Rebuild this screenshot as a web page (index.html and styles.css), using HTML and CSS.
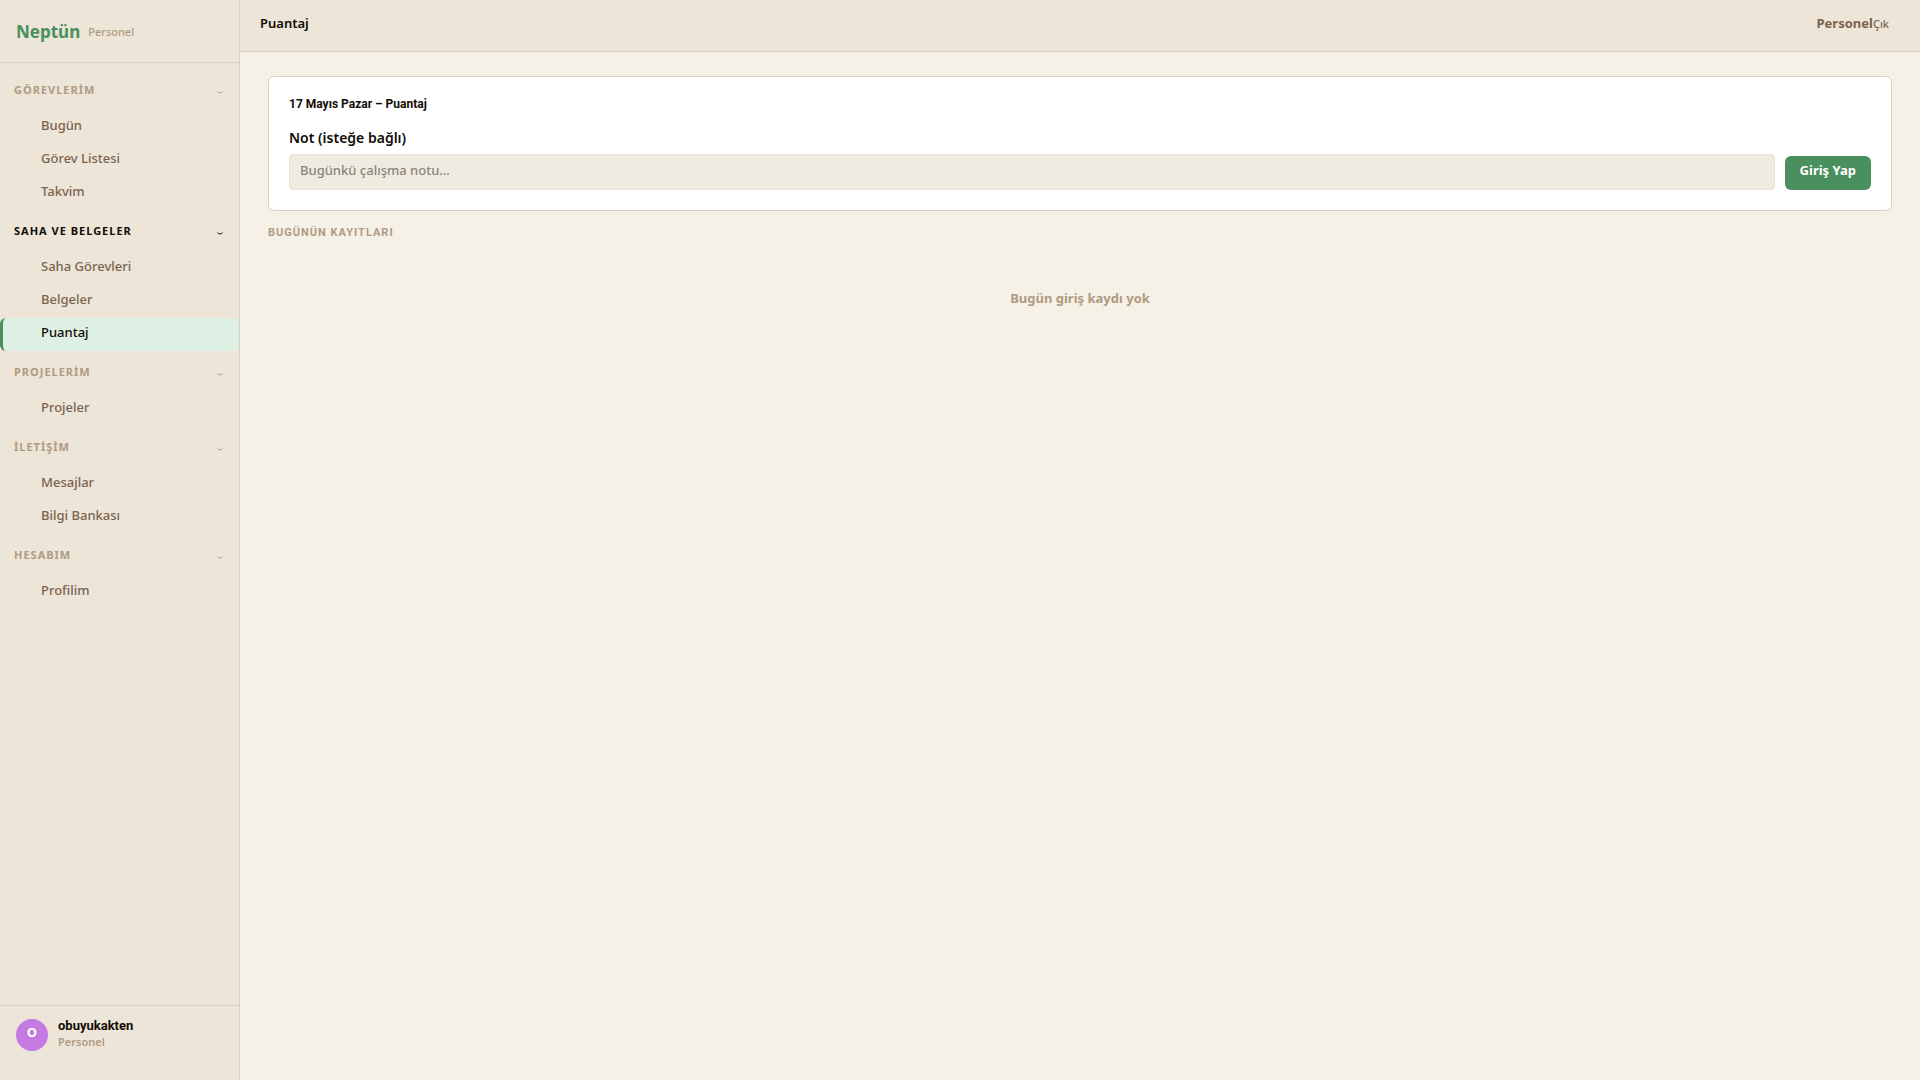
FILE: index.html
```html
<!DOCTYPE html>
<html lang="tr">
<head>
<meta charset="utf-8">
<meta name="viewport" content="width=device-width, initial-scale=1">
<title>Puantaj – Neptün</title>
<link rel="stylesheet" href="styles.css">
</head>
<body>
<svg class="sprite" aria-hidden="true"><symbol id="chevron" viewBox="0 0 6 3"><path d="M.4 .6Q1.4 1.9 3 1.9T5.6 .6" fill="none" stroke="currentColor" stroke-width="1"/></symbol></svg>
<div class="app">
  <aside class="sidebar">
    <div class="brand"><span class="brand-name">Neptün</span><span class="brand-role">Personel</span></div>
    <nav class="nav">
      <section>
        <button class="group" type="button">GÖREVLERİM<svg class="chevron"><use href="#chevron"/></svg></button>
        <a class="item" href="#bugun">Bugün</a>
        <a class="item" href="#gorevler">Görev Listesi</a>
        <a class="item" href="#takvim">Takvim</a>
      </section>
      <section>
        <button class="group group-current" type="button">SAHA VE BELGELER<svg class="chevron"><use href="#chevron"/></svg></button>
        <a class="item" href="#saha">Saha Görevleri</a>
        <a class="item" href="#belgeler">Belgeler</a>
        <a class="item item-active" href="#puantaj" aria-current="page">Puantaj</a>
      </section>
      <section>
        <button class="group" type="button">PROJELERİM<svg class="chevron"><use href="#chevron"/></svg></button>
        <a class="item" href="#projeler">Projeler</a>
      </section>
      <section>
        <button class="group" type="button">İLETİŞİM<svg class="chevron"><use href="#chevron"/></svg></button>
        <a class="item" href="#mesajlar">Mesajlar</a>
        <a class="item" href="#bilgi">Bilgi Bankası</a>
      </section>
      <section>
        <button class="group" type="button">HESABIM<svg class="chevron"><use href="#chevron"/></svg></button>
        <a class="item" href="#profil">Profilim</a>
      </section>
    </nav>
    <div class="user">
      <div class="avatar">O</div>
      <div class="user-info"><div class="user-name">obuyukakten</div><div class="user-role">Personel</div></div>
    </div>
  </aside>
  <div class="page">
    <header class="topbar">
      <h1 class="title">Puantaj</h1>
      <span class="account">Personel</span>
      <button class="logout" type="button">Çık</button>
    </header>
    <main class="content">
      <form class="card">
        <h2 class="card-title">17 Mayıs Pazar – Puantaj</h2>
        <div class="entry">
          <div class="field">
            <label class="label" for="note">Not (isteğe bağlı)</label>
            <input class="input" id="note" type="text" placeholder="Bugünkü çalışma notu…">
          </div>
          <button class="submit" type="button">Giriş Yap</button>
        </div>
      </form>
      <h3 class="records-title">BUGÜNÜN KAYITLARI</h3>
      <p class="empty">Bugün giriş kaydı yok</p>
    </main>
  </div>
</div>
</body>
</html>
```
FILE: styles.css
```css
:root {
  --bar: #ece5d8;
  --page: #f6f1e6;
  --line: #d9d0bf;
  --green: #4a8f5e;
  --ink: #120c05;
  --soft: #7a634e;
  --muted: #b09a82;
  --compact: Roboto, "Noto Sans", sans-serif;
}
* { box-sizing: border-box; }
body {
  margin: 0;
  background: var(--page);
  color: var(--ink);
  font: 500 13px/19px "Noto Sans", sans-serif;
}
h1, h2, h3, p { margin: 0; }
button, input { font: inherit; }
button { border: 0; background: none; cursor: pointer; }
.sprite { display: none; }

.app { display: flex; min-height: 100vh; }
.sidebar {
  display: flex;
  flex: 0 0 240px;
  flex-direction: column;
  background: var(--bar);
  border-right: 1px solid var(--line);
}
.brand {
  display: flex;
  align-items: center;
  gap: 8px;
  padding: 20px 16px 18px;
  border-bottom: 1px solid var(--line);
}
.brand-name { color: var(--green); font-size: 17px; font-weight: 700; line-height: 24px; }
.brand-role { color: var(--muted); font-size: 11px; line-height: 16px; }

.nav { flex: 1; padding-top: 6px; }
.group {
  display: flex;
  align-items: center;
  justify-content: space-between;
  width: 100%;
  padding: 13px 16px 13px 14px;
  color: var(--muted);
  font-size: 11px;
  font-weight: 700;
  line-height: 16px;
  letter-spacing: 1px;
}
.group-current { color: var(--ink); }
.chevron { width: 6px; height: 3px; margin-top: 4px; }
.item {
  display: block;
  padding: 5px 16px 9px 38px;
  border-left: 3px solid transparent;
  border-radius: 6px;
  color: var(--soft);
  text-decoration: none;
}
.item-active { background: #def0e4; border-left-color: var(--green); color: var(--ink); }

.user {
  display: flex;
  align-items: center;
  gap: 10px;
  padding: 12px 16px 28px;
  border-top: 1px solid var(--line);
}
.avatar {
  width: 32px;
  height: 32px;
  border-radius: 50%;
  background: #c47ae0;
  color: #fff;
  font-weight: 700;
  line-height: 27px;
  text-align: center;
}
.user-info { padding-bottom: 2px; line-height: 16px; }
.user-name { font-family: var(--compact); font-size: 13px; font-weight: 700; }
.user-role { color: var(--muted); font-size: 11px; font-weight: 600; }

.page { display: flex; flex: 1; flex-direction: column; min-width: 0; }
.topbar {
  display: flex;
  align-items: center;
  padding: 14px 31px 18px 20px;
  background: var(--bar);
  border-bottom: 1px solid var(--line);
}
.title { flex: 1; font-size: 13px; font-weight: 600; }
.account { color: var(--soft); font-weight: 700; }
.logout { padding: 0; color: var(--soft); font-size: 11px; }

.content { padding: 24px 28px; }
.card {
  padding: 20px;
  background: #fff;
  border: 1px solid var(--line);
  border-radius: 6px;
}
.card-title {
  margin-bottom: 17px;
  font-family: var(--compact);
  font-size: 12px;
  font-weight: 700;
  line-height: 14px;
}
.entry { display: flex; align-items: flex-end; gap: 10px; }
.field { display: flex; flex: 1; flex-direction: column; gap: 6px; }
.label { font-size: 14px; font-weight: 600; line-height: 20px; }
.input {
  width: 100%;
  height: 36px;
  padding: 4px 10px 9px;
  background: #f0ebe0;
  border: 1px solid #e8e0d2;
  border-radius: 4px;
  color: var(--ink);
}
.input::placeholder { color: #8a857b; opacity: 1; }
.submit {
  padding: 5px 15px 10px;
  background: var(--green);
  border-radius: 6px;
  color: #fff;
  font-weight: 700;
}
.records-title {
  margin-top: 14px;
  color: var(--muted);
  font-family: var(--compact);
  font-size: 11px;
  font-weight: 700;
  line-height: 16px;
  letter-spacing: 1px;
}
.empty { padding: 48px 0; color: var(--muted); font-weight: 700; text-align: center; }
```
